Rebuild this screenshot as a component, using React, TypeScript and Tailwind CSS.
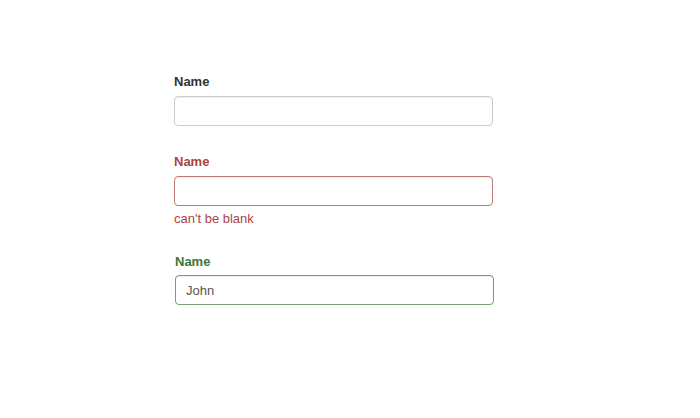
export default function App() {
  const font = { fontFamily: '"Liberation Sans", Arial, sans-serif' };
  return (
    <div className="w-[700px] h-[418px] bg-white" style={font}>
      <div className="pt-[73px] pl-[174px]">
        <div className="w-[319px] mb-[27px]">
          <label className="block text-[13px] leading-[18px] font-bold text-[#333333] mb-[5px]">Name</label>
          <input
            className="block w-full h-[30px] rounded-[4px] border border-[#cccccc] bg-white px-[11px] text-[13px] text-[#555555] outline-none shadow-[inset_0_1px_1px_rgba(0,0,0,0.075)]"
            defaultValue=""
          />
        </div>
        <div className="w-[319px] mb-[25px]">
          <label className="block text-[13px] leading-[18px] font-bold text-[#a94442] mb-[5px]">Name</label>
          <input
            className="block w-full h-[30px] rounded-[4px] border border-[#bd7a77] bg-white px-[11px] text-[13px] text-[#555555] outline-none shadow-[inset_0_1px_1px_rgba(0,0,0,0.075)]"
            defaultValue=""
          />
          <div className="mt-[4px] text-[13px] leading-[18px] text-[#a94442]">can't be blank</div>
        </div>
        <div className="w-[319px] ml-px">
          <label className="block text-[13px] leading-[18px] font-bold text-[#3c763d] mb-[4px]">Name</label>
          <input
            className="block w-full h-[30px] rounded-[4px] border border-[#769e77] bg-white px-[10px] text-[13px] text-[#555555] outline-none shadow-[inset_0_1px_1px_rgba(0,0,0,0.075)]"
            defaultValue="John"
          />
        </div>
      </div>
    </div>
  );
}
